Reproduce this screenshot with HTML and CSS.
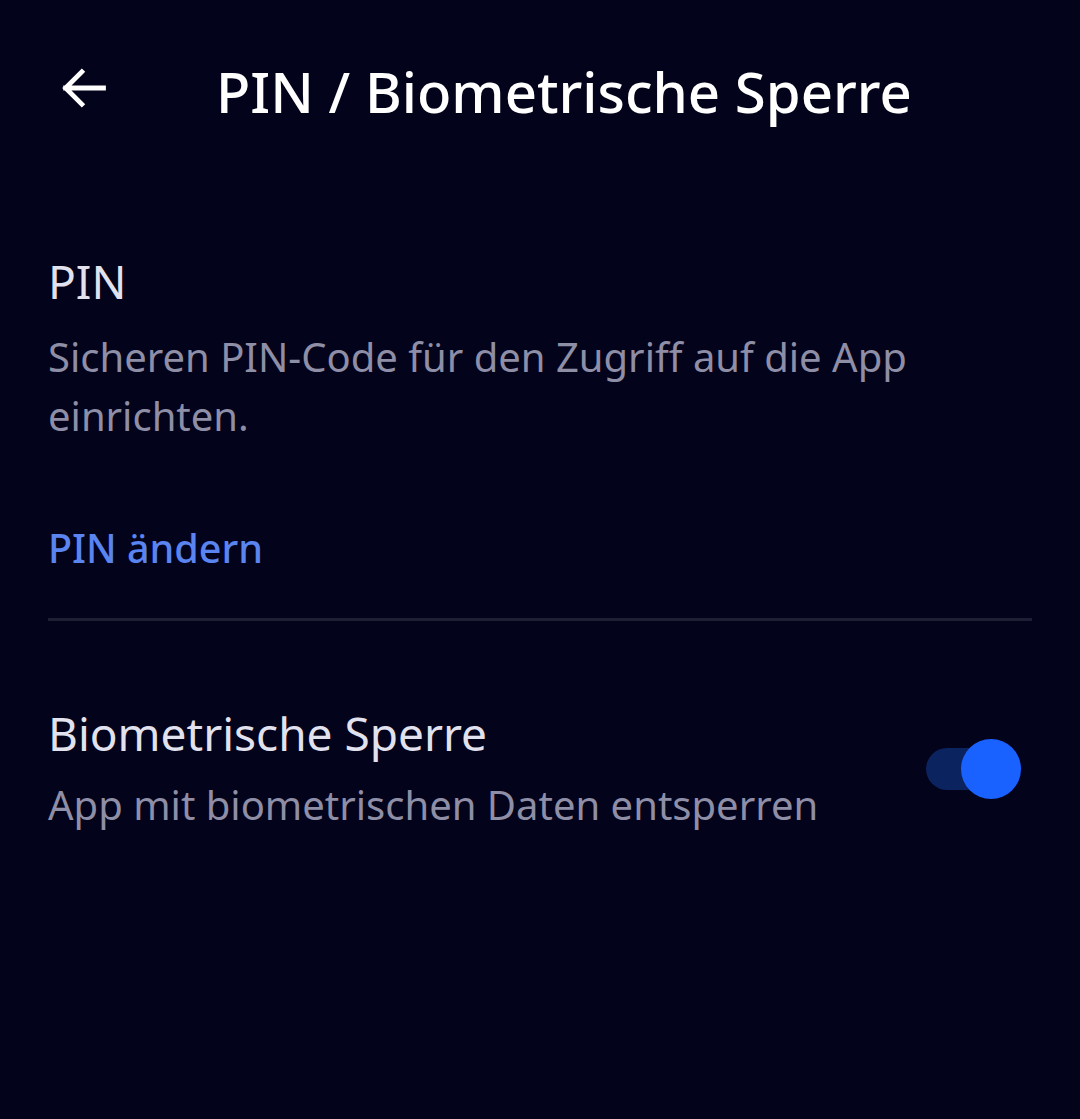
FILE: index.html
```html
<!DOCTYPE html>
<html lang="de">
<head>
  <meta charset="UTF-8" />
  <meta name="viewport" content="width=device-width, initial-scale=1.0"/>
  <title>PIN / Biometrische Sperre</title>
  <link rel="stylesheet" href="styles.css">
</head>
<body>
  <header class="top-bar">
    <button class="back-btn" aria-label="Zurück">
      <svg width="52" height="52" viewBox="0 0 24 24" fill="none" stroke="#ffffff" stroke-width="2.2" stroke-linecap="square">
        <path d="M21 12H3.5M11 4.5L3.5 12L11 19.5"/>
      </svg>
    </button>
    <h1 class="title">PIN / Biometrische Sperre</h1>
  </header>

  <main class="content">
    <section class="setting pin-setting">
      <h2 class="setting-title">PIN</h2>
      <p class="setting-desc">Sicheren PIN-Code für den Zugriff auf die App einrichten.</p>
      <a class="setting-link" href="#">PIN ändern</a>
    </section>

    <hr class="divider">

    <section class="setting bio-setting">
      <div class="setting-text">
        <h2 class="setting-title">Biometrische Sperre</h2>
        <p class="setting-desc">App mit biometrischen Daten entsperren</p>
      </div>
      <div class="switch on" role="switch" aria-checked="true">
        <span class="switch-thumb"></span>
      </div>
    </section>
  </main>
</body>
</html>
```

FILE: styles.css
```css
html, body {
  margin: 0;
  padding: 0;
  height: 100%;
  background-color: #03031b;
  font-family: 'Noto Sans', 'Open Sans', sans-serif;
  color: #e2e2ee;
}

.top-bar {
  display: flex;
  align-items: center;
  height: 176px;
  padding: 6px 0 0 56px;
  box-sizing: border-box;
}

.back-btn {
  display: flex;
  align-items: center;
  justify-content: center;
  width: 56px;
  height: 56px;
  padding: 0;
  margin: 0 104px 6px 0;
  background: none;
  border: none;
}

.title {
  margin: 0;
  font-size: 56.3px;
  font-weight: 500;
  color: #ffffff;
}

.content {
  padding: 73px 48px 0 48px;
}

.setting-title {
  margin: 0;
  font-size: 46px;
  font-weight: 400;
  line-height: 64px;
  color: #e2e2ee;
}

.setting-desc {
  margin: 14px 0 0 0;
  font-size: 40px;
  line-height: 59px;
  color: #8e8ea6;
}

.setting-link {
  display: inline-block;
  margin-top: 75px;
  font-size: 39.5px;
  font-weight: 500;
  line-height: 56px;
  color: #5a84f0;
  text-decoration: none;
}

.divider {
  margin: 42px 0 0 0;
  border: none;
  height: 3px;
  background: #1e1e34;
}

.bio-setting {
  display: flex;
  align-items: center;
  justify-content: space-between;
  padding-top: 80px;
}

.bio-setting .setting-desc {
  margin-top: 9.5px;
}

.switch {
  position: relative;
  width: 94px;
  height: 42px;
  margin: 4px 12px 0 0;
  border-radius: 21px;
  background: #0b235f;
}

.switch-thumb {
  position: absolute;
  top: 50%;
  right: -1px;
  width: 60px;
  height: 60px;
  margin-top: -30px;
  border-radius: 50%;
  background: #1a62ff;
}
```
